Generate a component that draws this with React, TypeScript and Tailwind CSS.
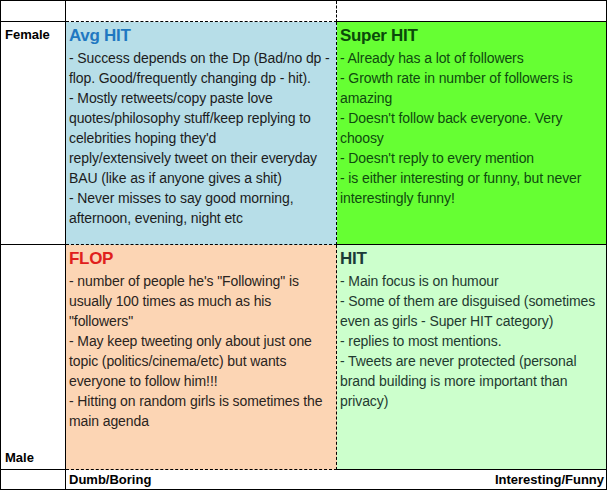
import React from "react";

const font = { fontFamily: '"Liberation Sans", Arial, sans-serif' };

type Quad = {
  title: string;
  titleColor: string;
  bg: string;
  text: string;
  lines: string[];
  dashed?: boolean;
};

const avgHit: Quad = {
  title: "Avg HIT",
  titleColor: "text-[#1f78c1]",
  bg: "bg-[#b7dee8]",
  text: "text-[#1c1c1c]",
  dashed: true,
  lines: [
    "- Success depends on the Dp (Bad/no dp -",
    "flop. Good/frequently changing dp - hit).",
    "- Mostly retweets/copy paste love",
    "quotes/philosophy stuff/keep replying to",
    "celebrities hoping they'd",
    "reply/extensively tweet on their everyday",
    "BAU (like as if anyone gives a shit)",
    "- Never misses to say good morning,",
    "afternoon, evening, night etc",
  ],
};

const superHit: Quad = {
  title: "Super HIT",
  titleColor: "text-[#0a4a0a]",
  bg: "bg-[#66ff33]",
  text: "text-[#0f4a0f]",
  lines: [
    "- Already has a lot of followers",
    "- Growth rate in number of followers is",
    "amazing",
    "- Doesn't follow back everyone. Very",
    "choosy",
    "- Doesn't reply to every mention",
    "- is either interesting or funny, but never",
    "interestingly funny!",
  ],
};

const flop: Quad = {
  title: "FLOP",
  titleColor: "text-[#e0201c]",
  bg: "bg-[#fcd5b4]",
  text: "text-[#2a2420]",
  dashed: true,
  lines: [
    "- number of people he's \"Following\" is",
    "usually 100 times as much as his",
    "\"followers\"",
    "- May keep tweeting only about just one",
    "topic (politics/cinema/etc) but wants",
    "everyone to follow him!!!",
    "- Hitting on random girls is sometimes the",
    "main agenda",
  ],
};

const hit: Quad = {
  title: "HIT",
  titleColor: "text-[#1b3a38]",
  bg: "bg-[#ccffcc]",
  text: "text-[#1f3a30]",
  lines: [
    "- Main focus is on humour",
    "- Some of them are disguised (sometimes",
    "even as girls - Super HIT category)",
    "- replies to most mentions.",
    "- Tweets are never protected (personal",
    "brand building is more important than",
    "privacy)",
  ],
};

function Cell({ q }: { q: Quad }) {
  return (
    <div
      className={`${q.bg} ${
        q.dashed ? "border-r border-dashed border-r-black" : "border-r border-black"
      } overflow-hidden border-b border-black pl-[3px] pt-[2px]`}
    >
      <div
        className={`text-[17px] font-bold leading-[24px] tracking-[-0.3px] ${q.titleColor}`}
      >
        {q.title}
      </div>
      <div className={`text-[14px] leading-[20px] tracking-[-0.1px] ${q.text}`}>
        {q.lines.map((l, i) => (
          <div key={i} className="whitespace-nowrap">
            {l}
          </div>
        ))}
      </div>
    </div>
  );
}

export default function App() {
  return (
    <div className="h-[490px] w-[608px] bg-white" style={font}>
      <div className="grid h-[490px] w-[607px] grid-cols-[65px_271px_270px] grid-rows-[21px_223px_225px_20px] border-l border-t border-black text-black">
        <div className="border-b border-r border-black" />
        <div className="border-b border-r border-dashed border-b-black border-r-black" />
        <div className="border-b border-r border-black" />

        <div className="border-b border-r border-black pl-[4px] pt-[3px] text-[13px] font-bold leading-[20px]">
          Female
        </div>
        <Cell q={avgHit} />
        <Cell q={superHit} />

        <div className="flex flex-col justify-end border-b border-r border-black pb-[1px] pl-[4px] text-[13px] font-bold leading-[20px]">
          Male
        </div>
        <Cell q={flop} />
        <Cell q={hit} />

        <div className="border-b border-r border-black" />
        <div className="border-b border-black pl-[3px] text-[13px] font-bold leading-[19px]">
          Dumb/Boring
        </div>
        <div className="border-b border-r border-black pr-[2px] text-right text-[13px] font-bold leading-[19px]">
          Interesting/Funny
        </div>
      </div>
    </div>
  );
}
